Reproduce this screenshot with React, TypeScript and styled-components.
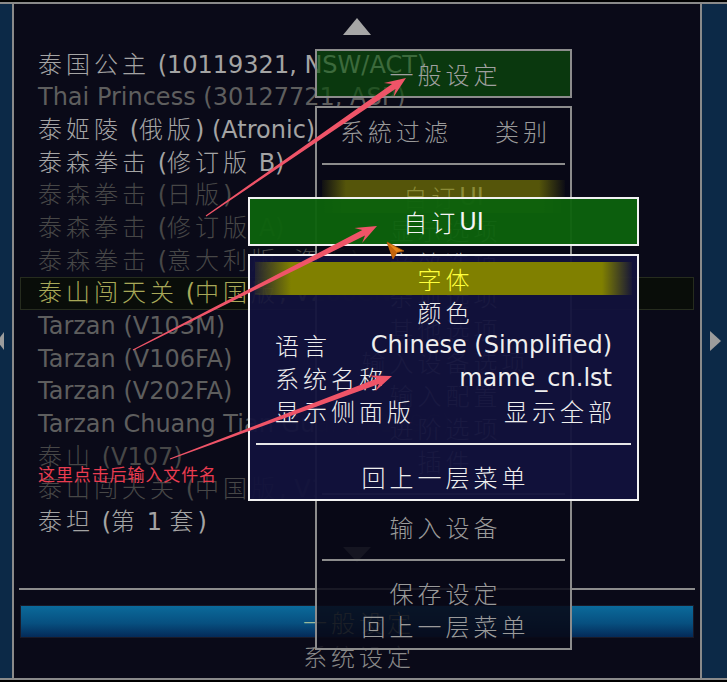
import React from 'react';
import styled, { createGlobalStyle } from 'styled-components';

const Global = createGlobalStyle`
  html, body { margin: 0; padding: 0; background: #000; }
  #root { width: 727px; height: 682px; }
`;

const FONT = `"DejaVu Sans", "Noto Sans CJK SC", sans-serif`;

const Screen = styled.div`
  position: relative;
  width: 727px;
  height: 682px;
  overflow: hidden;
  background: #000;
  padding-top: 2px;
  box-sizing: border-box;
  font-family: ${FONT};
`;

const Frame = styled.div`
  display: grid;
  grid-template-columns: 12px 2px 686px 2px 25px;
  height: 678px;
  box-sizing: border-box;
  border-top: 2px solid #8a8a8a;
  border-bottom: 2px solid #8a8a8a;
`;

const SidePanel = styled.div<{ $side: 'left' | 'right' }>`
  background: #0c2947;
  display: flex;
  align-items: center;
  padding-left: ${p => (p.$side === 'right' ? '8px' : '0')};
`;

const VRule = styled.div`
  background: #8a8a8a;
`;

const SideArrow = styled.div<{ $dir: 'left' | 'right' }>`
  width: 0;
  height: 0;
  ${p =>
    p.$dir === 'left'
      ? `margin-left: -3px; border-right: 7px solid #9c9c9c; border-top: 9px solid transparent; border-bottom: 9px solid transparent;`
      : `border-left: 11px solid #9c9c9c; border-top: 10px solid transparent; border-bottom: 10px solid transparent;`}
`;

const Main = styled.div`
  background: #0a0a18;
  display: flex;
  flex-direction: column;
  padding-top: 14px;
`;

const ScrollArrow = styled.div<{ $dir: 'up' | 'down' }>`
  align-self: center;
  width: 0;
  height: 0;
  border-left: 14px solid transparent;
  border-right: 14px solid transparent;
  ${p =>
    p.$dir === 'up'
      ? `border-bottom: 17px solid #a6a6a6;`
      : `border-top: 15px solid #6a6a6a; margin-top: 8px;`}
`;

const List = styled.div`
  margin-top: 13.5px;
  display: flex;
  flex-direction: column;
`;

type Tone = 'bright' | 'mid' | 'dim' | 'sel';
const toneColor: Record<Tone, string> = {
  bright: '#a4a4a4',
  mid: '#5e5e5e',
  dim: '#474747',
  sel: '#a8a858',
};

const GameRow = styled.div<{ $tone: Tone }>`
  height: 32.7px;
  line-height: 30.7px;
  box-sizing: border-box;
  margin: 0 6px;
  padding-left: 17px;
  border: 1px solid ${p => (p.$tone === 'sel' ? '#262c1e' : 'transparent')};
  background: ${p => (p.$tone === 'sel' ? '#090d09' : 'transparent')};
  color: ${p => toneColor[p.$tone]};
  font-size: 24px;
  white-space: nowrap;
  overflow: hidden;
`;

const Rule = styled.div`
  margin: 26px 5px 0;
  height: 2px;
  background: #8c8c8c;
`;

const StatusBar = styled.div`
  margin: 15px 6px 0;
  height: 33px;
  box-sizing: border-box;
  border: 1px solid #1a1a28;
  background: linear-gradient(#0b6a9b, #075080 55%, #042a58);
  display: flex;
  align-items: center;
  justify-content: center;
  font-size: 24px;
  color: #9ab89a;
`;

const Footer = styled.div`
  margin-top: 8px;
  height: 24px;
  line-height: 24px;
  text-align: center;
  font-size: 24px;
  color: #8a8a8a;
`;

const Han = styled.span<{ $end?: boolean }>`
  letter-spacing: 4px;
  font-weight: 300;
  ${p => (p.$end ? 'margin-right: -4px;' : '')}
`;

const CJK = /([\u2E80-\u9FFF\u3000-\u303F\uFF00-\uFFEF]+)/;
function Txt({ s }: { s: string }) {
  const parts = s.split(CJK).filter(p => p !== '');
  return (
    <>
      {parts.map((p, i) =>
        CJK.test(p) ? (
          <Han key={i} $end={i === parts.length - 1}>
            {p}
          </Han>
        ) : (
          <React.Fragment key={i}>{p}</React.Fragment>
        )
      )}
    </>
  );
}

/* ---------- menus (overlays) ---------- */

type Layer = 'back' | 'front';

const TitleBar = styled.div<{ $layer: Layer; $x: number; $y: number; $w: number }>`
  position: absolute;
  left: ${p => p.$x}px;
  top: ${p => p.$y}px;
  width: ${p => p.$w}px;
  height: 49px;
  box-sizing: border-box;
  border: 2px solid ${p => (p.$layer === 'front' ? '#f2f2f2' : '#8c8c8c')};
  background: ${p => (p.$layer === 'front' ? 'rgba(12, 98, 12, 0.96)' : 'rgba(10, 78, 10, 0.68)')};
  color: ${p => (p.$layer === 'front' ? '#f4f4f4' : '#a0a0a0')};
  display: flex;
  align-items: center;
  justify-content: center;
  font-size: 24px;
  white-space: nowrap;
`;

const MenuBox = styled.div<{ $layer: Layer; $x: number; $y: number; $w: number }>`
  position: absolute;
  left: ${p => p.$x}px;
  top: ${p => p.$y}px;
  width: ${p => p.$w}px;
  box-sizing: border-box;
  padding: 6px 5px;
  border: 2px solid ${p => (p.$layer === 'front' ? '#f2f2f2' : '#8c8c8c')};
  background: ${p => (p.$layer === 'front' ? 'rgba(18, 18, 60, 0.95)' : 'rgba(8, 8, 22, 0.87)')};
  display: flex;
  flex-direction: column;
`;

const MenuRow = styled.div<{ $layer: Layer; $split?: boolean }>`
  height: 33px;
  display: flex;
  align-items: center;
  justify-content: ${p => (p.$split ? 'space-between' : 'center')};
  padding: 0 ${p => (p.$layer === 'front' ? 20 : 18)}px;
  font-size: 24px;
  color: ${p => (p.$layer === 'front' ? '#eeeeee' : '#9a9a9a')};
  white-space: nowrap;
`;

const HiRow = styled(MenuRow)`
  background: ${p =>
    p.$layer === 'front'
      ? 'linear-gradient(90deg, rgba(128,128,0,0.15) 0, #808000 36px, #808000 calc(100% - 30px), rgba(128,128,0,0.05) 100%)'
      : 'linear-gradient(90deg, rgba(90,90,0,0.1) 0, #55550a 24px, #55550a calc(100% - 26px), rgba(90,90,0,0.05) 100%)'};
  color: ${p => (p.$layer === 'front' ? '#ffff3c' : '#8c8c38')};
`;

const SepRow = styled.div<{ $layer: Layer }>`
  height: 33px;
  display: flex;
  align-items: center;
  padding: 0 ${p => (p.$layer === 'front' ? 1 : 0)}px;
  &::after {
    content: '';
    flex: 1;
    height: 2px;
    background: ${p => (p.$layer === 'front' ? '#e6e6e6' : '#8c8c8c')};
  }
`;

const Note = styled.div`
  position: absolute;
  left: 38px;
  top: 464px;
  font-family: "Noto Sans CJK SC", sans-serif;
  font-size: 17px;
  letter-spacing: 0.9px;
  line-height: 20px;
  color: #ea3c50;
  white-space: nowrap;
`;

const Overlay = styled.svg`
  position: absolute;
  left: 0;
  top: 0;
  pointer-events: none;
`;

function arrowPoints(tx: number, ty: number, px: number, py: number): string {
  const dx = px - tx;
  const dy = py - ty;
  const L = Math.hypot(dx, dy);
  const ux = dx / L;
  const uy = dy / L;
  const nx = -uy;
  const ny = ux;
  const t = 0.5;
  const s = 3;
  const baseBack = 15;
  const wingBack = 21;
  const w = 8.5;
  const bx = px - ux * baseBack;
  const by = py - uy * baseBack;
  const wx = px - ux * wingBack;
  const wy = py - uy * wingBack;
  const pts: [number, number][] = [
    [tx + nx * t, ty + ny * t],
    [bx + nx * s, by + ny * s],
    [wx + nx * w, wy + ny * w],
    [px, py],
    [wx - nx * w, wy - ny * w],
    [bx - nx * s, by - ny * s],
    [tx - nx * t, ty - ny * t],
  ];
  return pts.map(([a, b]) => `${a.toFixed(1)},${b.toFixed(1)}`).join(' ');
}

const games: { t: string; tone: Tone }[] = [
  { t: '泰国公主 (10119321, NSW/ACT)', tone: 'bright' },
  { t: 'Thai Princess (30127721, ASP)', tone: 'mid' },
  { t: '泰姬陵 (俄版) (Atronic)', tone: 'bright' },
  { t: '泰森拳击 (修订版 B)', tone: 'bright' },
  { t: '泰森拳击 (日版)', tone: 'dim' },
  { t: '泰森拳击 (修订版 A)', tone: 'dim' },
  { t: '泰森拳击 (意大利版, 盗版)', tone: 'dim' },
  { t: '泰山闯天关 (中国版, V206CN)', tone: 'sel' },
  { t: 'Tarzan (V103M)', tone: 'mid' },
  { t: 'Tarzan (V106FA)', tone: 'mid' },
  { t: 'Tarzan (V202FA)', tone: 'mid' },
  { t: 'Tarzan Chuang Tian Guan (V109C)', tone: 'mid' },
  { t: '泰山 (V107)', tone: 'dim' },
  { t: '泰山闯天关 (中国版, V102CN)', tone: 'dim' },
  { t: '泰坦 (第 1 套)', tone: 'bright' },
];

const backItems = ['显示选项', '音效选项', '杂项选项', '其他选项', '输入设备选项', '输入配置', '进阶选项', '插件'];

export default function App() {
  return (
    <Screen>
      <Global />
      <Frame>
        <SidePanel $side="left">
          <SideArrow $dir="left" />
        </SidePanel>
        <VRule />
        <Main>
          <ScrollArrow $dir="up" />
          <List>
            {games.map((g, i) => (
              <GameRow key={i} $tone={g.tone}>
                <Txt s={g.t} />
              </GameRow>
            ))}
          </List>
          <ScrollArrow $dir="down" />
          <Rule />
          <StatusBar>
            <Txt s="一般设定" />
          </StatusBar>
          <Footer>
            <Txt s="系统设定" />
          </Footer>
        </Main>
        <VRule />
        <SidePanel $side="right">
          <SideArrow $dir="right" />
        </SidePanel>
      </Frame>

      {/* back menu: general settings */}
      <TitleBar $layer="back" $x={315} $y={49} $w={257}>
        <Txt s="一般设定" />
      </TitleBar>
      <MenuBox $layer="back" $x={315} $y={106} $w={257}>
        <MenuRow $layer="back" $split>
          <span><Txt s="系統过滤" /></span>
          <span><Txt s="类别" /></span>
        </MenuRow>
        <SepRow $layer="back" />
        <HiRow $layer="back">
          <Txt s="自订 UI" />
        </HiRow>
        {backItems.map(t => (
          <MenuRow key={t} $layer="back">
            <Txt s={t} />
          </MenuRow>
        ))}
        <SepRow $layer="back" />
        <MenuRow $layer="back">
          <Txt s="输入设备" />
        </MenuRow>
        <SepRow $layer="back" />
        <MenuRow $layer="back">
          <Txt s="保存设定" />
        </MenuRow>
        <MenuRow $layer="back">
          <Txt s="回上一层菜单" />
        </MenuRow>
      </MenuBox>

      {/* front menu: customize UI */}
      <TitleBar $layer="front" $x={248} $y={197} $w={391}>
        <Txt s="自订 UI" />
      </TitleBar>
      <MenuBox $layer="front" $x={248} $y={254} $w={391}>
        <HiRow $layer="front">
          <Txt s="字体" />
        </HiRow>
        <MenuRow $layer="front">
          <Txt s="颜色" />
        </MenuRow>
        <MenuRow $layer="front" $split>
          <span><Txt s="语言" /></span>
          <span>Chinese (Simplified)</span>
        </MenuRow>
        <MenuRow $layer="front" $split>
          <span><Txt s="系统名称" /></span>
          <span>mame_cn.lst</span>
        </MenuRow>
        <MenuRow $layer="front" $split>
          <span><Txt s="显示侧面版" /></span>
          <span><Txt s="显示全部" /></span>
        </MenuRow>
        <SepRow $layer="front" />
        <MenuRow $layer="front">
          <Txt s="回上一层菜单" />
        </MenuRow>
      </MenuBox>

      <Note>这里点击后输入文件名</Note>

      <Overlay width={727} height={682} viewBox="0 0 727 682">
        <g fill="#ef5468">
          <polygon points={arrowPoints(206, 216, 406, 78)} />
          <polygon points={arrowPoints(133, 350, 377, 226)} />
          <polygon points={arrowPoints(170, 459, 392, 376)} />
        </g>
        <g transform="translate(387 242)">
          <polygon points="0,0 17,9 10,10.5 6,17" fill="#e8861a" stroke="#9a4c08" strokeWidth="0.8" strokeLinejoin="round" />
          <polygon points="0,0 10,10.5 6,17" fill="#c4650c" />
        </g>
      </Overlay>
    </Screen>
  );
}
